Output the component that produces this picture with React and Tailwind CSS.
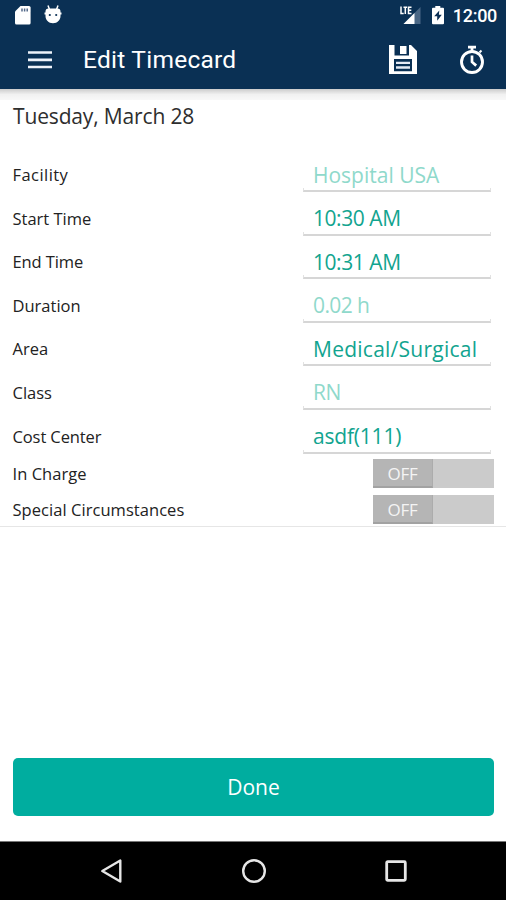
const FIELDS = [
  { label: 'Facility', value: 'Hospital USA', disabled: true, labelSpacing: 'tracking-[0.45px]', spacing: 'tracking-[0px]' },
  { label: 'Start Time', value: '10:30 AM', labelSpacing: 'tracking-[0px]', spacing: 'tracking-[-0.45px]' },
  { label: 'End Time', value: '10:31 AM', labelSpacing: 'tracking-[-0.1px]', spacing: 'tracking-[-0.45px]' },
  { label: 'Duration', value: '0.02 h', disabled: true, labelSpacing: 'tracking-[0px]', spacing: 'tracking-[-0.6px]' },
  { label: 'Area', value: 'Medical/Surgical', labelSpacing: 'tracking-[0px]', spacing: 'tracking-[0.25px]' },
  { label: 'Class', value: 'RN', disabled: true, labelSpacing: 'tracking-[0px]', spacing: 'tracking-[-0.4px]' },
  { label: 'Cost Center', value: 'asdf(111)', labelSpacing: 'tracking-[-0.1px]', spacing: 'tracking-[-0.2px]' },
]

const SWITCHES = ['In Charge', 'Special Circumstances']

function StatusBar() {
  return (
    <div className="flex h-[31px] items-start pl-[14px] pr-[9px] pt-[5px] text-white">
      <svg width="18" height="20" viewBox="0 0 18 20">
        <path d="M6.500 1H15a1.600 1.600 0 0 1 1.600 1.600v15.300a1.600 1.600 0 0 1-1.600 1.600H2.600A1.600 1.600 0 0 1 1 17.900V6.500z" fill="#fff" />
        <path d="M8 3.500v3M10.600 3.500v3M13.200 3.500v3" stroke="#53698a" strokeWidth="1.500" />
      </svg>
      <svg className="ml-[12px]" width="18" height="20" viewBox="0 0 18 20">
        <path d="M4 .5l1.500 4M14 .5l-1.500 4" stroke="#fff" strokeWidth="1.500" />
        <path d="M4.500 3.500h9a3 3 0 0 1 3 3v4.500c0 4-3 7.200-7.500 7.200S1.500 15 1.500 11V6.500a3 3 0 0 1 3-3z" fill="#fff" />
        <path d="M.5 8.500h2M15.500 8.500h2" stroke="#fff" strokeWidth="2" />
        <circle cx="5.800" cy="10" r="1.100" fill="#0b2f55" />
        <circle cx="12.200" cy="10" r="1.100" fill="#0b2f55" />
      </svg>
      <div className="grow" />
      <svg width="22" height="20" viewBox="0 0 22 20">
        <path d="M21.500 2v17h-17z" fill="#4a6785" />
        <path d="M15.500 8v11h-11z" fill="#fff" />
        <path d="M2 1.500v7h2.700M4.500 2.200h3.600M6.300 2.200v6.800M12.500 2.200H9.500v6.200h3M9.500 5.200h2.800" fill="none" stroke="#fff" strokeWidth="1.500" />
      </svg>
      <svg className="ml-[10px]" width="14" height="20" viewBox="0 0 14 20">
        <path d="M4.300 1h5v1.700h2.700a1 1 0 0 1 1 1v14.600a1 1 0 0 1-1 1H2a1 1 0 0 1-1-1V3.700a1 1 0 0 1 1-1h2.300z" fill="#fff" />
        <path d="M8.300 5.500L3.200 11.300h3v4.500l4.600-6H7.900z" fill="#0b2f55" />
      </svg>
      <span className="ml-[8px] mt-[1px] font-['Roboto'] text-[18px] font-medium leading-[20px] tracking-[-0.3px]">12:00</span>
    </div>
  )
}

function AppBar() {
  return (
    <div className="flex h-[58px] items-center pl-[28px] pr-[21px] text-white">
      <svg width="24" height="18" viewBox="0 0 24 18">
        <path d="M0 1.500h24M0 8.800h24M0 16h24" stroke="#eef2f9" strokeWidth="2.700" />
      </svg>
      <h1 className="ml-[31px] font-['Roboto'] text-[24.500px] leading-[30px] tracking-[0.25px]">Edit Timecard</h1>
      <div className="grow" />
      <svg className="-mt-[2px]" width="28" height="29" viewBox="0 0 28 29">
        <path fillRule="evenodd" fill="#fff" d="M0 0h5.500v10.500h14.500V0h2l6 6v23H0zM5 14v12.200h18V14z" />
        <path fill="#fff" d="M11 1h6.500v8H11z" />
        <path d="M7 17.800h14M7 22.500h14" stroke="#e6ebf5" strokeWidth="2.300" />
      </svg>
      <svg className="ml-[42px]" width="26" height="30" viewBox="0 0 26 30">
        <path d="M9 2.200h8M13 2v4" fill="none" stroke="#fff" strokeWidth="2.800" />
        <circle cx="13" cy="17" r="10.500" fill="none" stroke="#fff" strokeWidth="2.900" />
        <path d="M13 10.500V17l4.200 3.600" fill="none" stroke="#fff" strokeWidth="2.700" />
        <path d="M20.500 7.500l2-2" stroke="#fff" strokeWidth="2" />
      </svg>
    </div>
  )
}

function Field({ label, value, disabled, labelSpacing, spacing }) {
  return (
    <div className="flex h-[43.600px] items-start justify-between pl-[12.500px] pr-[15px]">
      <span className={`pt-[10px] text-[16.500px] leading-[24px] text-[#222] ${labelSpacing}`}>{label}</span>
      <div className="relative h-[39px] w-[188px] pl-[10px] pt-[6.500px]">
        <span className={`block whitespace-nowrap text-[21px] leading-[30px] ${spacing} ${disabled ? 'text-[#8fd9cb]' : 'text-[#12a48f]'}`}>
          {value}
        </span>
        <div className="absolute bottom-0 left-0 h-[4px] w-full border-x border-b-2 border-x-[#e2e2e2] border-b-[#d6d6d6]" />
      </div>
    </div>
  )
}

function Switch({ label }) {
  return (
    <div className="flex h-[36px] items-start justify-between pl-[12.500px] pr-[12px] last:h-[31px]">
      <span className="pt-[3px] text-[16.500px] leading-[24px] tracking-[0.050px] text-[#222]">{label}</span>
      <div className="flex h-[29px] w-[121px] bg-[#cbcbcb]">
        <div className="h-full w-[60px] border-b-2 border-r border-b-[#a2a2a2] border-r-[#acacac] bg-[#b5b5b5] text-center text-[17px] leading-[29px] tracking-[-0.3px] text-[#f4f4f4]">
          OFF
        </div>
      </div>
    </div>
  )
}

export default function App() {
  return (
    <div className="flex h-[900px] w-[506px] flex-col overflow-hidden bg-white font-['Open_Sans','Noto_Sans',sans-serif]">
      <header className="bg-[#0a3054]">
        <StatusBar />
        <AppBar />
      </header>
      <div className="h-[11px] shrink-0 bg-linear-to-b from-[#cccccc] via-[#f1f1f1] to-[#f8f8f8]" />

      <main className="flex grow flex-col">
        <h2 className="pl-[13px] pt-[1px] text-[21px] leading-[30px] tracking-[-0.150px] text-[#2e2e2e]">Tuesday, March 28</h2>
        <div className="mt-[22px]">
          {FIELDS.map((field) => <Field key={field.label} {...field} />)}
        </div>
        <div className="mt-[0.800px] border-b border-[#e6e6e6]">
          {SWITCHES.map((label) => <Switch key={label} label={label} />)}
        </div>
        <div className="grow" />
        <button className="mx-[13px] mb-[25px] h-[58px] w-[481px] rounded-[5px] bg-[#00ad9f] pt-[2px] text-[21px] tracking-[0px] text-white">Done</button>
      </main>

      <nav className="flex h-[59px] items-center justify-between border-t border-[#777] bg-black pl-[100px] pr-[99px]">
        <svg width="24" height="26" viewBox="0 0 24 26">
          <path d="M20.300 2.500v21L2.300 13z" fill="none" stroke="#e6e6e6" strokeWidth="2.400" strokeLinejoin="round" />
        </svg>
        <svg className="-ml-[2px]" width="26" height="26" viewBox="0 0 26 26">
          <circle cx="13" cy="13" r="10.800" fill="none" stroke="#e6e6e6" strokeWidth="2.400" />
        </svg>
        <svg width="22" height="22" viewBox="0 0 22 22">
          <rect x="1.700" y="1.700" width="18.600" height="18.600" rx="1" fill="none" stroke="#e6e6e6" strokeWidth="2.800" />
        </svg>
      </nav>
    </div>
  )
}
